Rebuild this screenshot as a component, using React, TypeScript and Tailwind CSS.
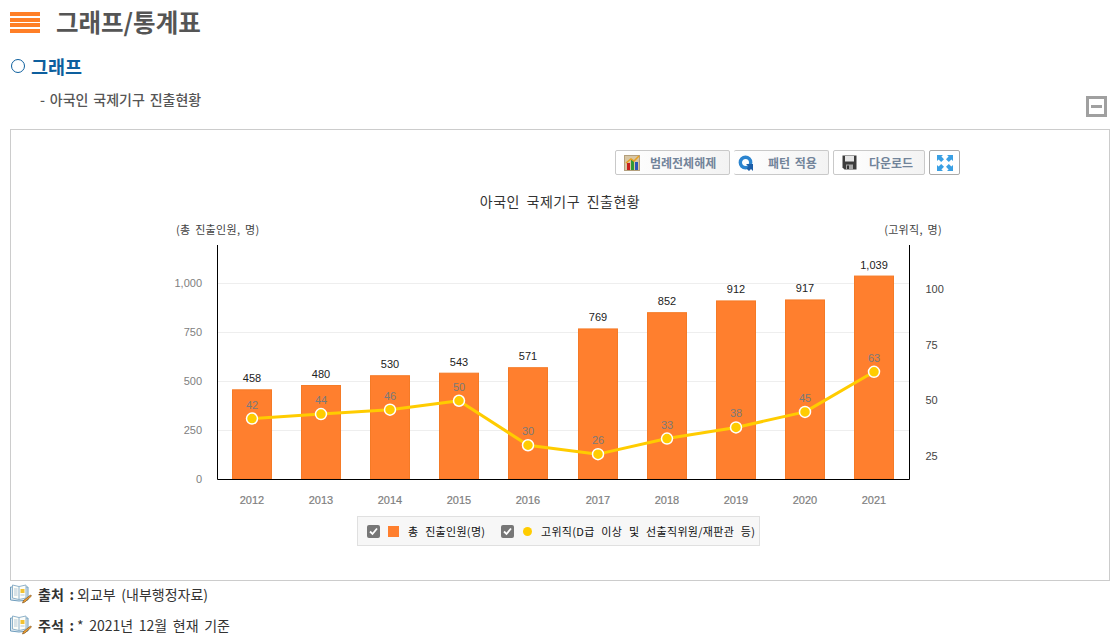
const years = [2012, 2013, 2014, 2015, 2016, 2017, 2018, 2019, 2020, 2021];
const totals = [458, 480, 530, 543, 571, 769, 852, 912, 917, 1039];
const seniors = [42, 44, 46, 50, 30, 26, 33, 38, 45, 63];
const xs = [252, 321, 390, 459, 528, 598, 667, 736, 805, 874];
const leftTicks = [0, 250, 500, 750, 1000];
const rightTicks = [25, 50, 75, 100];

const barY = (v: number) => 479 - v * 0.1958;
const lineY = (v: number) => 289.5 + (100 - v) * 2.225;

function BookIcon() {
  return (
    <svg width="22" height="20" viewBox="0 0 22 20" className="shrink-0">
      <path d="M0.5 3 L0.5 16 L9 17 L18 16 L18 3 Z" fill="#dfe9f0" stroke="#6f9dbd" strokeWidth="1" />
      <path d="M2.5 1 L9 2.5 L16 1 L16 14 L9 15.5 L2.5 14 Z" fill="#fdfdf8" stroke="#8fb2ca" strokeWidth="1" />
      <path d="M9 2.5 L9 15.5" stroke="#8fb2ca" strokeWidth="1" />
      <rect x="10.5" y="5" width="4" height="4" fill="#f2c230" />
      <path d="M4 5h3.5M4 7h3.5M4 9h3.5M4 11h3.5M10.5 11h4" stroke="#b3c8d6" strokeWidth="1" />
      <path d="M20.5 11 L21.5 12 L15 18 L12.5 19 L13.5 16.5 Z" fill="#f0a030" stroke="#6b4210" strokeWidth="0.6" />
    </svg>
  );
}

function BarsIcon() {
  return (
    <svg width="16" height="16" viewBox="0 0 16 16">
      <rect x="0.5" y="0.5" width="15" height="15" fill="#d8c6a4" stroke="#b49f7c" />
      <rect x="3" y="8" width="3" height="7" fill="#c8201c" />
      <rect x="7" y="5" width="3" height="10" fill="#2f9a35" />
      <rect x="11" y="7" width="3" height="8" fill="#2c55b8" />
      <path d="M2 8 L7 4 L10 6 L15 1" fill="none" stroke="#e8a020" strokeWidth="1.5" />
    </svg>
  );
}

function RefreshIcon() {
  return (
    <svg width="16" height="16" viewBox="0 0 16 16">
      <circle cx="7.5" cy="7.5" r="5.2" fill="none" stroke="#2b84cf" strokeWidth="3.4" />
      <path d="M8 9 L15 9 L15 16 L13 14 L11 16 L8.5 13.5 L10.5 11.5 Z" fill="#1c5ea8" />
    </svg>
  );
}

function SaveIcon() {
  return (
    <svg width="15" height="15" viewBox="0 0 15 15">
      <path d="M0.5 0.5 H14.5 V14.5 H2.5 L0.5 12.5 Z" fill="#3c3c3c" />
      <rect x="3" y="1" width="9" height="5.5" fill="#e6e6e6" />
      <rect x="4" y="9.5" width="7" height="5" fill="#a8a8a8" />
      <rect x="5" y="10.5" width="2" height="3.5" fill="#333333" />
    </svg>
  );
}

function ExpandIcon() {
  return (
    <svg width="16" height="16" viewBox="0 0 16 16">
      <g fill="#3aa0e4">
        <path d="M0 0 H6 L4.4 1.6 L7 4.2 L4.2 7 L1.6 4.4 L0 6 Z" />
        <path d="M16 0 H10 L11.6 1.6 L9 4.2 L11.8 7 L14.4 4.4 L16 6 Z" />
        <path d="M0 16 H6 L4.4 14.4 L7 11.8 L4.2 9 L1.6 11.6 L0 10 Z" />
        <path d="M16 16 H10 L11.6 14.4 L9 11.8 L11.8 9 L14.4 11.6 L16 10 Z" />
      </g>
    </svg>
  );
}

function CheckBox() {
  return (
    <span className="flex h-[13px] w-[13px] shrink-0 items-center justify-center rounded-[2px] bg-[#777777]">
      <svg width="9" height="9" viewBox="0 0 9 9">
        <path d="M1 4.5 L3.5 7 L8 1.5" fill="none" stroke="#ffffff" strokeWidth="1.8" />
      </svg>
    </span>
  );
}

function ToolButton({ icon, label, className }: { icon: React.ReactNode; label: string; className: string }) {
  return (
    <div className={`flex h-[25px] items-center rounded-[2px] border border-[#c9c9c9] bg-gradient-to-r from-white to-[#f3f3f3] text-[12px] font-bold text-[#72849a] ${className}`}>
      {icon}
      <span className="whitespace-nowrap">{label}</span>
    </div>
  );
}

function Chart() {
  const krFont = '"Noto Sans CJK KR", sans-serif';
  return (
    <svg width="1098" height="335" viewBox="11 175 1098 335" className="block" style={{ fontFamily: '"Liberation Sans", "Noto Sans CJK KR", sans-serif' }}>
      <text x="560" y="207" textAnchor="middle" fontSize="14" letterSpacing="0.5" wordSpacing="3" fill="#333333" fontFamily={krFont}>아국인 국제기구 진출현황</text>
      <text x="176" y="234" fontSize="11" letterSpacing="0.3" wordSpacing="2" fill="#444444" fontFamily={krFont}>(총 진출인원, 명)</text>
      <text x="942" y="234" textAnchor="end" fontSize="11" letterSpacing="0.3" wordSpacing="2" fill="#444444" fontFamily={krFont}>(고위직, 명)</text>

      {leftTicks.slice(1).map((t) => (
        <line key={t} x1="218" x2="909" y1={Math.round(barY(t)) + 0.5} y2={Math.round(barY(t)) + 0.5} stroke="#eeeeee" />
      ))}

      {totals.map((v, i) => (
        <g key={years[i]}>
          <rect x={xs[i] - 19.5} y={barY(v) + 0.5} width="39" height={479 - barY(v) - 0.5} fill="#ff7f2e" stroke="#f57a26" />
          <text x={xs[i]} y={barY(v) - 7} textAnchor="middle" fontSize="11" fill="#222222">{v.toLocaleString('en-US')}</text>
          <text x={xs[i]} y="504" textAnchor="middle" fontSize="11" stroke="#808080" strokeWidth="0.2" fill="#808080">{years[i]}</text>
        </g>
      ))}

      <path d="M217.5 245 V479.5 H909.5 V245" fill="none" stroke="#000000" strokeWidth="1" />

      {leftTicks.map((t) => (
        <text key={t} x="202" y={barY(t) + 4} textAnchor="end" fontSize="11" fill="#808080">{t.toLocaleString('en-US')}</text>
      ))}
      {rightTicks.map((t) => (
        <text key={t} x="925.5" y={lineY(t) + 3.5} fontSize="11" fill="#444444">{t}</text>
      ))}

      <polyline points={seniors.map((v, i) => `${xs[i]},${lineY(v)}`).join(' ')} fill="none" stroke="#ffcc00" strokeWidth="3" strokeLinejoin="round" />
      {seniors.map((v, i) => (
        <g key={years[i]}>
          <circle cx={xs[i]} cy={lineY(v)} r="5.5" fill="#ffcc00" stroke="#ffffff" strokeWidth="1.5" />
          <text x={xs[i]} y={lineY(v) - 10} textAnchor="middle" fontSize="11" fill="#7a7a7a">{v}</text>
        </g>
      ))}
    </svg>
  );
}

export default function App() {
  return (
    <div className="h-[640px] w-[1118px] overflow-hidden bg-white font-['Noto_Sans_CJK_KR',sans-serif] text-[#333333]">
      <div className="flex h-[45px] items-center pl-[10px]">
        <div className="flex h-[21px] w-[30px] flex-col gap-[1.5px]">
          <div className="flex-1 bg-[#ff7f27]" />
          <div className="flex-1 bg-[#ff7f27]" />
          <div className="flex-1 bg-[#ff7f27]" />
          <div className="flex-1 bg-[#ff7f27]" />
        </div>
        <h1 className="ml-[16px] text-[24.5px] font-bold leading-none text-[#555555]">그래프/통계표</h1>
      </div>

      <div className="mt-[11px] flex h-[20px] items-center pl-[11px]">
        <span className="h-[14px] w-[14px] rounded-full border-[1.5px] border-[#0d5f9e]" />
        <h2 className="ml-[6px] text-[18.5px] font-bold leading-none text-[#0d5f9e]">그래프</h2>
      </div>

      <div className="relative mt-[13px] h-[40px] pl-[40px]">
        <p className="text-[14px] font-medium leading-[20px] text-[#555555] [word-spacing:1.7px]">- 아국인 국제기구 진출현황</p>
        <div className="absolute left-[1086px] top-[7px] flex h-[21px] w-[21px] items-center justify-center border-[3px] border-[#a0a0a0]">
          <div className="h-[3px] w-[11px] bg-[#a0a0a0]" />
        </div>
      </div>

      <div className="ml-[10px] h-[452px] w-[1100px] border border-[#cccccc]">
        <div className="flex justify-end gap-[4px] pr-[149px] pt-[20px]">
          <ToolButton icon={<BarsIcon />} label="범례전체해제" className="w-[115px] gap-[10px] pl-[8px]" />
          <ToolButton icon={<RefreshIcon />} label="패턴 적용" className="w-[95px] gap-[14px] border-l-0 pl-[4px] [word-spacing:2px]" />
          <ToolButton icon={<SaveIcon />} label="다운로드" className="w-[92px] gap-[12px] pl-[8px]" />
          <div className="flex h-[25px] w-[31px] items-center justify-center rounded-[2px] border border-[#aaaaaa] bg-white">
            <ExpandIcon />
          </div>
        </div>

        <Chart />

        <div className="ml-[346px] mt-[6px] flex h-[30px] w-[403px] items-center border border-[#e0e0e0] bg-[#f7f7f7] pl-[9px] text-[11px] leading-none tracking-[0.3px] text-[#111111] [word-spacing:4px]">
          <CheckBox />
          <span className="ml-[8px] h-[11px] w-[11px] bg-[#ff7f2e]" />
          <span className="ml-[9px] w-[93px] whitespace-nowrap">총 진출인원(명)</span>
          <CheckBox />
          <span className="ml-[9px] h-[9px] w-[9px] rounded-full bg-[#ffcc00]" />
          <span className="ml-[9px] whitespace-nowrap">고위직(D급 이상 및 선출직위원/재판관 등)</span>
        </div>
      </div>

      <div className="mt-[2px] flex h-[22px] items-center pl-[10px] text-[14px] [word-spacing:2.5px]">
        <BookIcon />
        <span className="ml-[6px] font-bold text-[#333333]">출처 :</span>
        <span className="ml-[3px]">외교부 (내부행정자료)</span>
      </div>
      <div className="mt-[9px] flex h-[22px] items-center pl-[10px] text-[14px] [word-spacing:2.5px]">
        <BookIcon />
        <span className="ml-[6px] font-bold text-[#333333]">주석 :</span>
        <span className="ml-[3px]">* 2021년 12월 현재 기준</span>
      </div>
    </div>
  );
}
